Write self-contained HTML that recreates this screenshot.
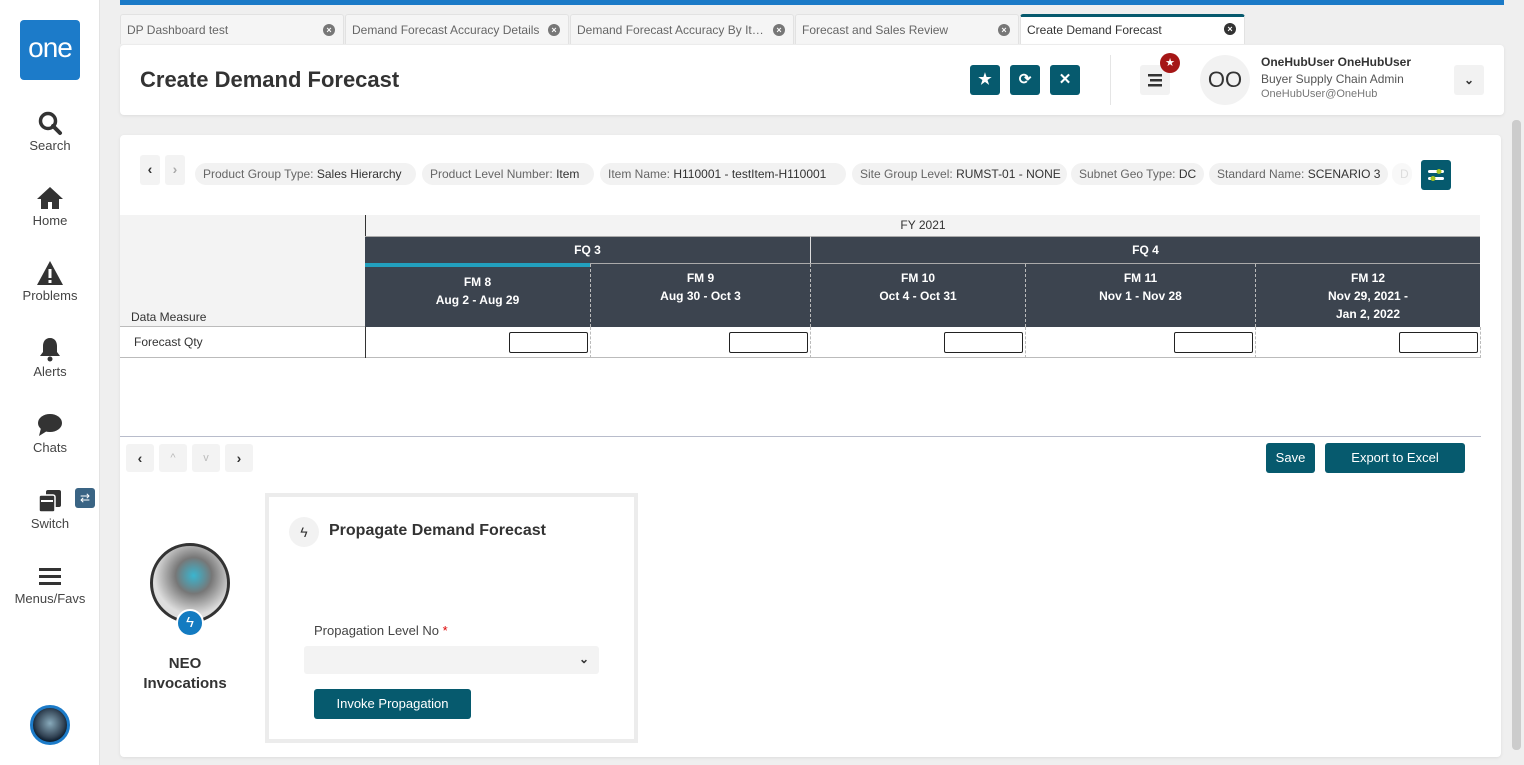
<!DOCTYPE html>
<html><head><meta charset="utf-8"><style>
*{box-sizing:border-box;margin:0;padding:0}
body{width:1524px;height:765px;overflow:hidden;background:#efefef;font-family:"Liberation Sans",sans-serif;position:relative;color:#333}
.abs{position:absolute}
.side{left:0;top:0;width:100px;height:765px;background:#fff;border-right:1px solid #e3e3e3}
.nav{position:absolute;left:0;width:100px;text-align:center;font-size:13px;color:#444}
.nav svg{display:block;margin:0 auto 2px}
.tab{position:absolute;top:14px;height:30px;background:#f5f5f5;border:1px solid #e2e2e2;border-bottom:none;border-radius:3px 3px 0 0;font-size:12px;color:#666;padding:8px 6px;white-space:nowrap}
.tab .x{position:absolute;right:8px;top:9px;width:12px;height:12px;border-radius:50%;background:#777;color:#fff;font-size:9px;line-height:12px;text-align:center;font-weight:bold}
.card{background:#fff;border-radius:4px;box-shadow:0 1px 3px rgba(0,0,0,.08)}
.btn{position:absolute;width:30px;height:30px;background:#065a6e;border-radius:3px;color:#fff;text-align:center;line-height:30px;font-size:15px;font-weight:bold}
.chip{position:absolute;top:163px;height:22px;background:#f2f2f2;border-radius:11px;font-size:12px;color:#666;padding:4px 8px;white-space:nowrap;overflow:hidden}
.chip b{font-weight:normal;color:#333}
.dk{background:#3c444f;color:#fff;font-size:12px;font-weight:bold;text-align:center}
.inp{position:absolute;top:332px;width:79px;height:21px;border:1px solid #222;border-radius:2px;background:#fff}
.sb{position:absolute;width:30px;height:28px;background:#f3f3f3;border-radius:3px;text-align:center;line-height:28px;font-size:14px;color:#333}
</style></head><body>
<div class="abs side"></div>
<div class="abs" style="left:20px;top:20px;width:60px;height:60px;background:#1c7bc9;border-radius:4px;color:#fff;font-size:28px;text-align:center;line-height:56px;letter-spacing:-1px">one</div>
<div class="nav" style="top:110px"><svg width="26" height="26" viewBox="0 0 26 26"><circle cx="11" cy="11" r="7.5" fill="none" stroke="#333" stroke-width="3.5"/><path d="M16 16l7 7" stroke="#333" stroke-width="4" stroke-linecap="round"/></svg>Search</div>
<div class="nav" style="top:185px"><svg width="28" height="26" viewBox="0 0 28 26"><path d="M14 2L1 14h4v10h7v-7h4v7h7V14h4z" fill="#333"/></svg>Home</div>
<div class="nav" style="top:260px"><svg width="28" height="26" viewBox="0 0 28 26"><path d="M14 1L1 25h26z" fill="#333"/><rect x="12.5" y="9" width="3" height="9" fill="#fff"/><rect x="12.5" y="20" width="3" height="3" fill="#fff"/></svg>Problems</div>
<div class="nav" style="top:336px"><svg width="24" height="26" viewBox="0 0 24 26"><path d="M12 2c-5 0-7 4-7 8v6l-3 4h20l-3-4v-6c0-4-2-8-7-8z" fill="#333"/><circle cx="12" cy="23" r="2.5" fill="#333"/></svg>Alerts</div>
<div class="nav" style="top:412px"><svg width="28" height="26" viewBox="0 0 28 26"><ellipse cx="14" cy="11" rx="12" ry="9" fill="#333"/><path d="M5 16l-2 8 8-5z" fill="#333"/></svg>Chats</div>
<div class="nav" style="top:488px"><svg width="26" height="26" viewBox="0 0 26 26"><rect x="9" y="2" width="15" height="17" rx="2" fill="#333"/><rect x="2" y="7" width="16" height="17" rx="2" fill="#333" stroke="#fff" stroke-width="1.5"/><rect x="4" y="12" width="12" height="2" fill="#fff"/></svg>Switch</div>
<div class="abs" style="left:75px;top:488px;width:20px;height:20px;background:#3a6484;border-radius:3px;color:#fff;font-size:12px;text-align:center;line-height:20px">⇄</div>
<div class="nav" style="top:565px"><svg width="26" height="24" viewBox="0 0 26 24"><rect x="2" y="3" width="22" height="3" fill="#333"/><rect x="2" y="10" width="22" height="3" fill="#333"/><rect x="2" y="17" width="22" height="3" fill="#333"/></svg>Menus/Favs</div>
<div class="abs" style="left:30px;top:705px;width:40px;height:40px;border-radius:50%;background:radial-gradient(circle at 50% 45%,#8ab 0,#345 55%,#123 70%);border:3px solid #1c7bc9"></div>

<div class="abs" style="left:120px;top:0;width:1384px;height:5px;background:#1b7ac7"></div>
<div class="tab" style="left:120px;width:224px">DP Dashboard test<span class="x">×</span></div>
<div class="tab" style="left:345px;width:224px">Demand Forecast Accuracy Details<span class="x">×</span></div>
<div class="tab" style="left:570px;width:224px">Demand Forecast Accuracy By It…<span class="x">×</span></div>
<div class="tab" style="left:795px;width:224px">Forecast and Sales Review<span class="x">×</span></div>
<div class="tab" style="left:1020px;width:225px;background:#fff;color:#333;border-top:3px solid #065a6e;padding-top:6px">Create Demand Forecast<span class="x" style="background:#333;top:6px">×</span></div>

<div class="abs card" style="left:120px;top:45px;width:1384px;height:70px"></div>
<div class="abs" style="left:140px;top:67px;font-size:22px;font-weight:bold;color:#333">Create Demand Forecast</div>
<div class="btn" style="left:970px;top:65px">★</div>
<div class="btn" style="left:1010px;top:65px">⟳</div>
<div class="btn" style="left:1050px;top:65px">✕</div>
<div class="abs" style="left:1110px;top:55px;width:1px;height:50px;background:#e5e5e5"></div>
<div class="abs" style="left:1140px;top:65px;width:30px;height:30px;background:#f2f2f2;border-radius:3px"><svg width="30" height="30"><rect x="8" y="9" width="14" height="2.5" fill="#333"/><rect x="10" y="14" width="12" height="2.5" fill="#333"/><rect x="8" y="19" width="14" height="2.5" fill="#333"/></svg></div>
<div class="abs" style="left:1160px;top:53px;width:20px;height:20px;border-radius:50%;background:#a51616;color:#fff;font-size:11px;text-align:center;line-height:20px">★</div>
<div class="abs" style="left:1200px;top:55px;width:50px;height:50px;border-radius:50%;background:#f2f2f2;font-size:22px;text-align:center;line-height:50px;color:#333">OO</div>
<div class="abs" style="left:1261px;top:55px;font-size:12px;font-weight:bold;color:#333">OneHubUser OneHubUser</div>
<div class="abs" style="left:1261px;top:72px;font-size:12px;color:#555">Buyer Supply Chain Admin</div>
<div class="abs" style="left:1261px;top:88px;font-size:11px;color:#777">OneHubUser@OneHub</div>
<div class="abs" style="left:1454px;top:65px;width:30px;height:30px;background:#f2f2f2;border-radius:3px;text-align:center;line-height:30px;font-size:12px;font-weight:bold">⌄</div>
<div class="abs" style="left:1512px;top:120px;width:9px;height:630px;background:#ccc;border-radius:4px"></div>

<div class="abs card" style="left:120px;top:135px;width:1381px;height:622px"></div>
<div class="sb" style="left:140px;top:155px;width:20px;height:30px;font-weight:bold">‹</div>
<div class="sb" style="left:165px;top:155px;width:20px;height:30px;color:#aaa;font-weight:bold">›</div>
<div class="chip" style="left:195px;width:221px">Product Group Type: <b>Sales Hierarchy</b></div>
<div class="chip" style="left:422px;width:172px">Product Level Number: <b>Item</b></div>
<div class="chip" style="left:600px;width:246px">Item Name: <b>H110001 - testItem-H110001</b></div>
<div class="chip" style="left:852px;width:215px">Site Group Level: <b>RUMST-01 - NONE</b></div>
<div class="chip" style="left:1071px;width:133px">Subnet Geo Type: <b>DC</b></div>
<div class="chip" style="left:1209px;width:179px">Standard Name: <b>SCENARIO 3</b></div>
<div class="chip" style="left:1392px;width:20px;color:#ddd;background:#f8f8f8">D</div>
<div class="abs" style="left:1421px;top:160px;width:30px;height:30px;background:#065a6e;border-radius:3px"><svg width="30" height="30"><rect x="7" y="10" width="16" height="3" rx="1.5" fill="#fff"/><rect x="7" y="17" width="16" height="3" rx="1.5" fill="#fff"/><circle cx="18" cy="11.5" r="2.5" fill="#a7c520"/><circle cx="12" cy="18.5" r="2.5" fill="#a7c520"/></svg></div>

<div class="abs" style="left:120px;top:215px;width:245px;height:112px;background:#f3f3f3;border-bottom:1px solid #bbb"></div>
<div class="abs" style="left:131px;top:310px;font-size:12px;color:#333">Data Measure</div>
<div class="abs" style="left:365px;top:215px;width:1115px;height:21px;background:#f3f3f3;border-left:1px solid #333;font-size:12px;text-align:center;line-height:21px;color:#333">FY 2021</div>
<div class="abs dk" style="left:365px;top:236px;width:445px;height:27px;line-height:27px;border-top:1px solid #aaa">FQ 3</div>
<div class="abs dk" style="left:810px;top:236px;width:670px;height:27px;line-height:27px;border-top:1px solid #aaa;border-left:1px solid #ddd">FQ 4</div>
<div class="abs" style="left:365px;top:263px;width:1115px;height:1px;background:#aaa"></div>
<div class="abs" style="left:365px;top:263px;width:225px;height:4px;background:#22a0be"></div>
<div class="abs dk" style="left:365px;top:267px;width:225px;height:60px;padding-top:6px;line-height:18px">FM 8<br>Aug 2 - Aug 29</div>
<div class="abs dk" style="left:590px;top:264px;width:220px;height:63px;padding-top:5px;line-height:18px;border-left:1px dashed #bbb">FM 9<br>Aug 30 - Oct 3</div>
<div class="abs dk" style="left:810px;top:264px;width:215px;height:63px;padding-top:5px;line-height:18px;border-left:1px dashed #bbb">FM 10<br>Oct 4 - Oct 31</div>
<div class="abs dk" style="left:1025px;top:264px;width:230px;height:63px;padding-top:5px;line-height:18px;border-left:1px dashed #bbb">FM 11<br>Nov 1 - Nov 28</div>
<div class="abs dk" style="left:1255px;top:264px;width:225px;height:63px;padding-top:5px;line-height:18px;border-left:1px dashed #bbb">FM 12<br>Nov 29, 2021 -<br>Jan 2, 2022</div>
<div class="abs" style="left:120px;top:327px;width:1360px;height:31px;border-bottom:1px solid #bbb"></div>
<div class="abs" style="left:365px;top:327px;width:1px;height:31px;background:#333"></div>
<div class="abs" style="left:590px;top:327px;height:31px;border-left:1px dashed #bbb"></div>
<div class="abs" style="left:810px;top:327px;height:31px;border-left:1px dashed #bbb"></div>
<div class="abs" style="left:1025px;top:327px;height:31px;border-left:1px dashed #bbb"></div>
<div class="abs" style="left:1255px;top:327px;height:31px;border-left:1px dashed #bbb"></div>
<div class="abs" style="left:1480px;top:327px;height:31px;border-left:1px dashed #bbb"></div>
<div class="abs" style="left:134px;top:335px;font-size:12px;color:#333">Forecast Qty</div>
<div class="inp" style="left:509px"></div><div class="inp" style="left:729px"></div><div class="inp" style="left:944px"></div><div class="inp" style="left:1174px"></div><div class="inp" style="left:1399px"></div>

<div class="abs" style="left:120px;top:436px;width:1361px;height:1px;background:#b8bccb"></div>
<div class="sb" style="left:126px;top:444px;width:28px;font-weight:bold">‹</div>
<div class="sb" style="left:159px;top:444px;width:28px;color:#bbb;font-size:11px">^</div>
<div class="sb" style="left:192px;top:444px;width:28px;color:#bbb;font-size:11px">v</div>
<div class="sb" style="left:225px;top:444px;width:28px;font-weight:bold">›</div>
<div class="abs" style="left:1266px;top:443px;width:49px;height:30px;background:#065a6e;border-radius:3px;color:#fff;font-size:13px;text-align:center;line-height:30px">Save</div>
<div class="abs" style="left:1325px;top:443px;width:140px;height:30px;background:#065a6e;border-radius:3px;color:#fff;font-size:13px;text-align:center;line-height:30px">Export to Excel</div>

<div class="abs" style="left:150px;top:543px;width:80px;height:80px;border-radius:50%;border:3px solid #333;background:radial-gradient(circle at 55% 40%,#3ab5cf 0,#777 30%,#ddd 65%)"></div>
<div class="abs" style="left:176px;top:609px;width:28px;height:28px;border-radius:50%;background:#137bc1;border:2px solid #fff;color:#fff;font-size:15px;text-align:center;line-height:24px">ϟ</div>
<div class="abs" style="left:140px;top:654px;width:90px;text-align:center;font-size:15px;font-weight:bold;color:#333;line-height:20px">NEO<br>Invocations</div>
<div class="abs" style="left:265px;top:493px;width:373px;height:250px;border:4px solid #ececec;background:#fff"></div>
<div class="abs" style="left:289px;top:517px;width:30px;height:30px;border-radius:50%;background:#f2f2f2;text-align:center;line-height:30px;font-size:14px">ϟ</div>
<div class="abs" style="left:329px;top:522px;font-size:16px;font-weight:bold;color:#333">Propagate Demand Forecast</div>
<div class="abs" style="left:314px;top:623px;font-size:13px;color:#444">Propagation Level No <span style="color:#d00">*</span></div>
<div class="abs" style="left:304px;top:646px;width:295px;height:28px;background:#f3f3f3;border-radius:3px;text-align:right;padding-right:10px;line-height:26px;font-size:12px;font-weight:bold">⌄</div>
<div class="abs" style="left:314px;top:689px;width:157px;height:30px;background:#065a6e;border-radius:3px;color:#fff;font-size:13px;text-align:center;line-height:30px">Invoke Propagation</div>
</body></html>
